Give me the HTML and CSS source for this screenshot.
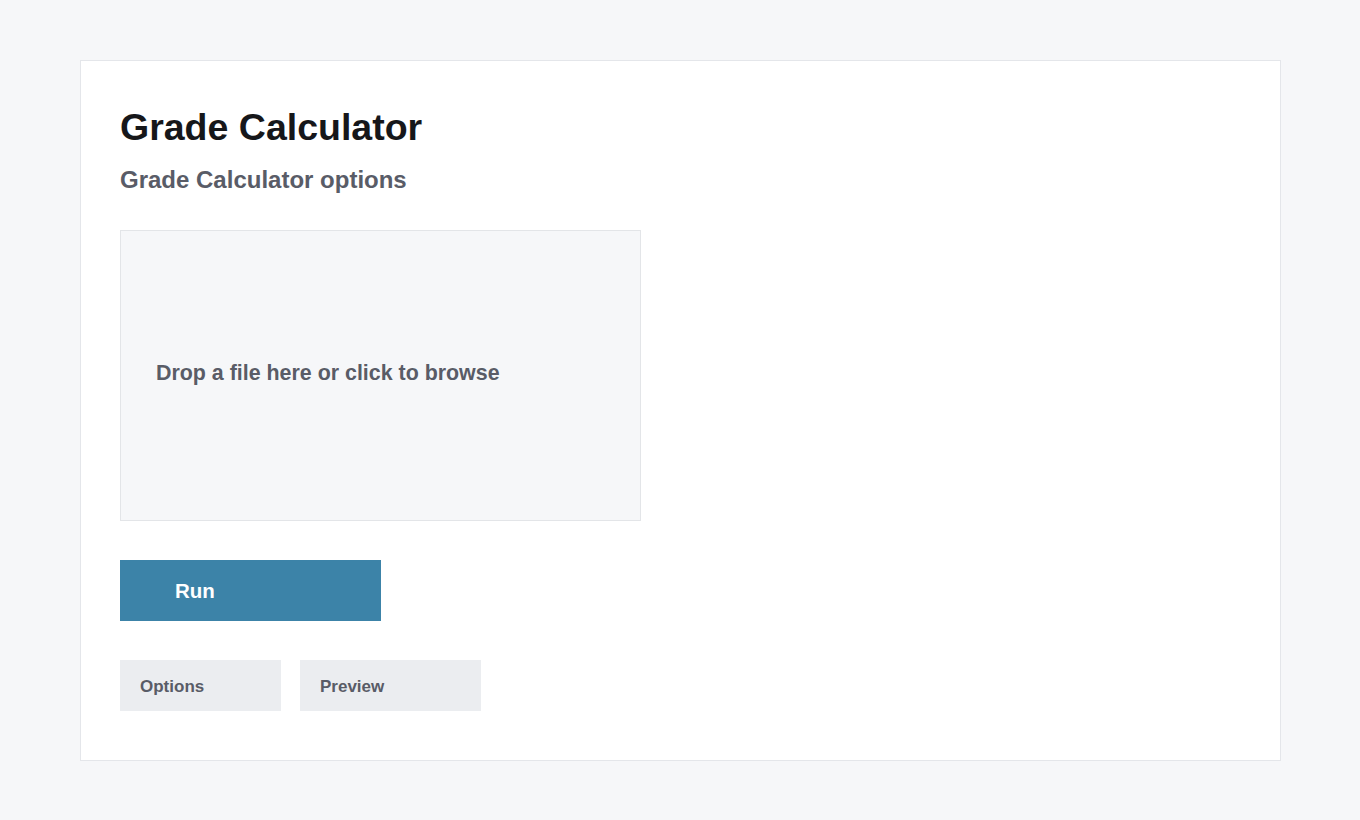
FILE: index.html
```html
<!DOCTYPE html>
<html lang="en">
<head>
<meta charset="utf-8">
<title>Grade Calculator</title>
<link rel="stylesheet" href="styles.css">
</head>
<body>
<main class="card">
  <h1 class="title">Grade Calculator</h1>
  <h2 class="subtitle">Grade Calculator options</h2>
  <div class="dropzone">Drop a file here or click to browse</div>
  <button class="run">Run</button>
  <div class="tabs">
    <button class="tab tab-options">Options</button>
    <button class="tab tab-preview">Preview</button>
  </div>
</main>
</body>
</html>
```

FILE: styles.css
```css
html, body {
  margin: 0;
  padding: 0;
}
body {
  background: #f6f7f9;
  font-family: "Liberation Sans", Arial, sans-serif;
  padding: 60px 80px;
}
.card {
  box-sizing: border-box;
  width: 1201px;
  height: 701px;
  background: #ffffff;
  border: 1px solid #e4e6ea;
  padding: 39px 39px;
  display: flex;
  flex-direction: column;
  align-items: flex-start;
}
.title {
  margin: 0;
  font-size: 37.5px;
  line-height: 54px;
  font-weight: 700;
  color: #16171a;
}
.subtitle {
  margin: 13px 0 0;
  font-size: 24px;
  line-height: 26px;
  font-weight: 700;
  color: #595c67;
}
.dropzone {
  box-sizing: border-box;
  margin-top: 37px;
  width: 521px;
  height: 291px;
  background: #f6f7f9;
  border: 1px solid #e3e5e8;
  padding: 0 35px 4px;
  display: flex;
  align-items: center;
  font-size: 21.4px;
  font-weight: 700;
  color: #595c67;
}
.run {
  margin-top: 39px;
  width: 261px;
  height: 61px;
  border: 0;
  background: #3c83a8;
  color: #ffffff;
  font-family: inherit;
  font-size: 20.5px;
  font-weight: 700;
  text-align: left;
  padding: 0 0 0 55px;
}
.tabs {
  margin-top: 39px;
  display: flex;
  gap: 19px;
}
.tab {
  height: 51px;
  border: 0;
  background: #ebedf0;
  color: #595c67;
  font-family: inherit;
  font-size: 17px;
  font-weight: 700;
  text-align: left;
  padding: 2px 20px 0;
}
.tab-options { width: 161px; }
.tab-preview { width: 181px; }
```
